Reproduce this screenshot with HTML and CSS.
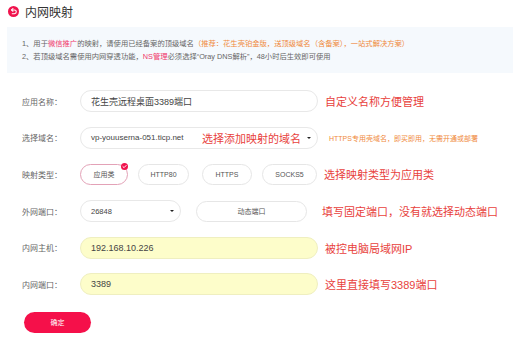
FILE: index.html
```html
<!DOCTYPE html>
<html lang="zh-CN">
<head>
    <meta charset="UTF-8">
    <title>内网映射</title>
    <link rel="stylesheet" href="styles.css">
</head>
<body>

    <div class="header">
        <span class="backIcon">
            <svg width="11" height="11" viewBox="0 0 12 12">
                <circle cx="6" cy="6" r="6" fill="#f0134d"/>
                <path d="M4.2 4.3 H7 A2 2 0 0 1 7 8.4 H4.6" fill="none" stroke="#fff" stroke-width="1.2" stroke-linecap="round"/>
                <path d="M5.4 2.9 L3.8 4.3 L5.4 5.7" fill="none" stroke="#fff" stroke-width="1.2" stroke-linecap="round" stroke-linejoin="round"/>
            </svg>
        </span>
        <span class="title">内网映射</span>
    </div>

    <div class="notice">
        <p>1、用于<span class="pink">微信推广</span>的映射，请使用已经备案的顶级域名<span class="orange">（推荐：花生壳铂金版，送顶级域名（含备案），一站式解决方案）</span></p>
        <p>2、若顶级域名需使用内网穿透功能，<span class="pink">NS管理</span>必须选择“Oray DNS解析”，48小时后生效即可使用</p>
    </div>

    <div class="form">
        <div class="row">
            <span class="label">应用名称：</span>
            <div class="field">花生壳远程桌面3389端口</div>
            <span class="note">自定义名称方便管理</span>
        </div>

        <div class="row">
            <span class="label">选择域名：</span>
            <div class="field select">
                <span class="domain">vp-youuserna-051.ticp.net</span>
                <span class="note inField">选择添加映射的域名</span>
                <span class="caret near"></span>
            </div>
            <span class="hint">HTTPS专用壳域名，即买即用，无需开通或部署</span>
        </div>

        <div class="row">
            <span class="label">映射类型：</span>
            <div class="types">
                <span class="type active w48">应用类<span class="badge">
                    <svg width="7" height="7" viewBox="0 0 8 8">
                        <circle cx="4" cy="4" r="4" fill="#f0134d"/>
                        <path d="M2.2 4.1 L3.5 5.3 L5.9 2.8" fill="none" stroke="#fff" stroke-width="1.1" stroke-linecap="round" stroke-linejoin="round"/>
                    </svg>
                </span></span>
                <span class="type w51">HTTP80</span>
                <span class="type w50">HTTPS</span>
                <span class="type w55">SOCKS5</span>
            </div>
            <span class="note">选择映射类型为应用类</span>
        </div>

        <div class="row">
            <span class="label">外网端口：</span>
            <div class="portGroup">
                <div class="field select short">
                    <span>26848</span>
                    <span class="caret"></span>
                </div>
                <span class="type dynamic">动态端口</span>
            </div>
            <span class="note wide">填写固定端口，没有就选择动态端口</span>
        </div>

        <div class="row">
            <span class="label">内网主机：</span>
            <div class="field filled">192.168.10.226</div>
            <span class="note">被控电脑局域网IP</span>
        </div>

        <div class="row">
            <span class="label">内网端口：</span>
            <div class="field filled">3389</div>
            <span class="note">这里直接填写3389端口</span>
        </div>

        <div class="actions">
            <span class="submit">确定</span>
        </div>
    </div>

</body>
</html>
```

FILE: styles.css
```css
html {
    margin: 0;
    padding: 0;
}

body {
    margin: 0;
    padding: 0;
    background: #fff;
    font-family: "Liberation Sans", "Noto Sans CJK SC", sans-serif;
    color: #555;
    overflow: hidden;
}

.header {
    display: flex;
    align-items: center;
    height: 22px;
    padding-left: 8px;
}

.backIcon {
    display: flex;
    width: 11px;
    height: 11px;
}

.title {
    margin-left: 6px;
    font-size: 12px;
    color: #333;
}

.notice {
    margin: 5px 3px 0 7px;
    padding: 10px 0 10px 15px;
    background: #f5f9fd;
    font-size: 7.3px;
    color: #666;
}

.notice p {
    margin: 0;
    line-height: 13px;
    white-space: nowrap;
}

.pink {
    color: #f0376a;
}

.orange {
    color: #f08a3c;
}

.form {
    margin-top: 10px;
    padding-left: 22px;
}

.row {
    display: flex;
    align-items: center;
    height: 36.6px;
}

.label {
    width: 58px;
    font-size: 8px;
    color: #666;
}

.field {
    box-sizing: border-box;
    display: flex;
    align-items: center;
    width: 238px;
    height: 22px;
    padding: 0 10px;
    border: 1px solid #e8e8e8;
    border-radius: 11px;
    font-size: 9px;
    color: #444;
    white-space: nowrap;
}

.select {
    padding-right: 6px;
}

.domain {
    font-size: 8px;
}

.short {
    width: 101px;
    font-size: 7.5px;
}

.caret {
    margin-left: auto;
    width: 0;
    height: 0;
    border-left: 2px solid transparent;
    border-right: 2px solid transparent;
    border-top: 2.5px solid #222;
}

.caret.near {
    margin-left: 6px;
}

.filled {
    background: #fdfdca;
    border-color: #efefc0;
}

.note {
    margin-left: 7px;
    font-size: 11px;
    color: #e8413c;
    white-space: nowrap;
}

.inField {
    margin-left: auto;
}

.wide {
    margin-left: 15px;
}

.hint {
    margin-left: 11px;
    font-size: 7px;
    color: #f08a3c;
    white-space: nowrap;
}

.types {
    display: flex;
    gap: 10px;
    width: 237px;
}

.type {
    position: relative;
    box-sizing: border-box;
    display: flex;
    align-items: center;
    justify-content: center;
    height: 21px;
    border: 1px solid #e6e6e6;
    border-radius: 11px;
    font-size: 7px;
    color: #555;
}

.w48 { width: 48px; }
.w51 { width: 51px; margin-right: 3px; }
.w50 { width: 50px; }
.w55 { width: 55px; }

.type.active {
    border-color: #e3a2b7;
}

.badge {
    position: absolute;
    top: -2px;
    right: -1px;
    display: flex;
}

.portGroup {
    display: flex;
    align-items: center;
    gap: 15px;
    width: 227px;
}

.dynamic {
    width: 111px;
}

.actions {
    display: flex;
    padding: 9px 0 0 2px;
}

.submit {
    display: flex;
    align-items: center;
    justify-content: center;
    width: 67px;
    height: 21px;
    border-radius: 11px;
    background: #f5104a;
    color: #fff;
    font-size: 7px;
}
```
